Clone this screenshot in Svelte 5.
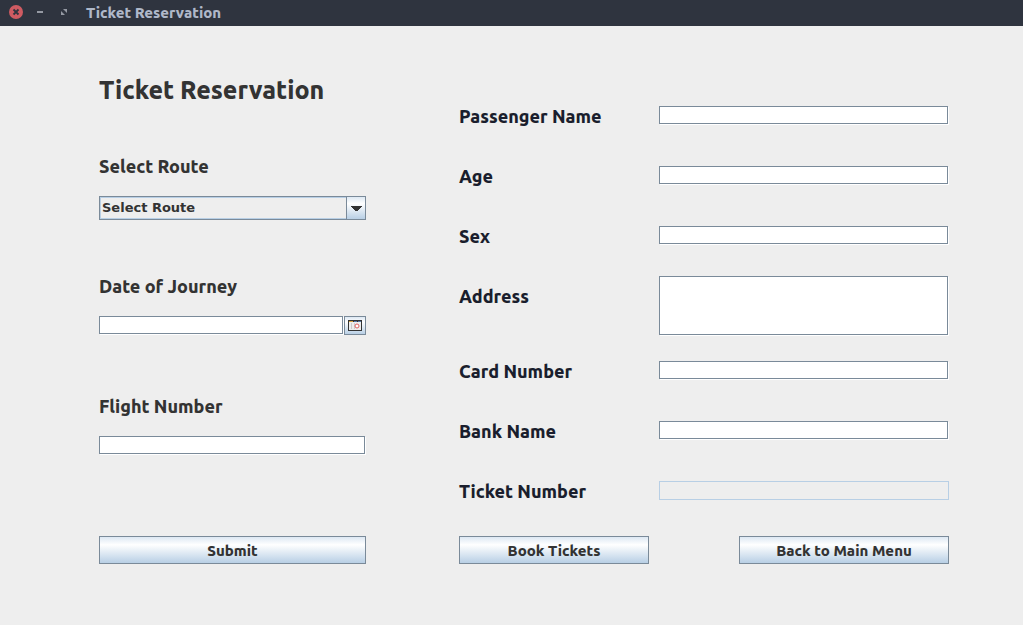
<script>
  let route = $state('Select Route');
  let journeyDate = $state('');
  let flight = $state('');
  let passenger = $state({ name: '', age: '', sex: '', address: '', card: '', bank: '', ticket: '' });

  const fields = [
    { key: 'name', label: 'Passenger Name' },
    { key: 'age', label: 'Age' },
    { key: 'sex', label: 'Sex' },
    { key: 'address', label: 'Address', multiline: true },
    { key: 'card', label: 'Card Number' },
    { key: 'bank', label: 'Bank Name' },
    { key: 'ticket', label: 'Ticket Number', disabled: true }
  ];
</script>

<div class="window">
  <header class="titlebar">
    <button class="control" type="button" aria-label="Close">
      <svg width="14" height="14" viewBox="0 0 14 14">
        <circle cx="7" cy="7" r="7" fill="#cf5b62" />
        <path d="M4.500 4.500l5 5M9.500 4.500l-5 5" stroke="#30343f" stroke-width="1.8" />
      </svg>
    </button>
    <button class="control" type="button" aria-label="Minimize">
      <svg width="14" height="14" viewBox="0 0 14 14">
        <path d="M4 6h6v2H4z" fill="#9599a3" />
      </svg>
    </button>
    <button class="control" type="button" aria-label="Maximize">
      <svg width="14" height="14" viewBox="0 0 14 14">
        <path d="M6 4h4v4zM4 6v4h4z" fill="#9599a3" />
      </svg>
    </button>
    <span class="caption">Ticket Reservation</span>
  </header>

  <main>
    <form class="journey" onsubmit={(e) => e.preventDefault()}>
      <h1>Ticket Reservation</h1>
      <div class="group">
        <label for="route">Select Route</label>
        <div class="combo">
          <select id="route" bind:value={route}>
            <option>Select Route</option>
          </select>
          <span class="arrow">
            <svg width="11" height="5" viewBox="0 0 11 5" shape-rendering="crispEdges">
              <path d="M0 0h11v1h-1v1h-1v1h-1v1h-1v1h-3v-1h-1v-1h-1v-1h-1v-1h-1z" fill="#333" />
            </svg>
          </span>
        </div>
      </div>
      <div class="group">
        <label for="date">Date of Journey</label>
        <div class="date">
          <input id="date" type="text" bind:value={journeyDate} />
          <button class="metal picker" type="button" aria-label="Choose date">
            <svg width="14" height="11" viewBox="0 0 14 11">
              <path d="M0 0h14v11H0z" fill="#333" />
              <path d="M1 2h12v8H1z" fill="#eee" />
              <path d="M1 1h4v1H1z" fill="#d9a441" />
              <path d="M6 1h3v1H6z" fill="#5577a8" />
              <path d="M10 1h3v1h-3z" fill="#5577a8" />
              <path d="M3.500 3v6M6.500 3v6" stroke="#ccc" />
              <circle cx="9" cy="6" r="2" fill="#fff" stroke="#e06060" />
            </svg>
          </button>
        </div>
      </div>
      <div class="group">
        <label for="flight">Flight Number</label>
        <input id="flight" type="text" bind:value={flight} />
      </div>
      <button class="metal" type="submit">Submit</button>
    </form>

    <form class="passenger" onsubmit={(e) => e.preventDefault()}>
      {#each fields as field}
        <div class="row" class:tall={field.multiline}>
          <label for={field.key}>{field.label}</label>
          {#if field.multiline}
            <textarea id={field.key} bind:value={passenger[field.key]}></textarea>
          {:else}
            <input id={field.key} type="text" disabled={field.disabled} bind:value={passenger[field.key]} />
          {/if}
        </div>
      {/each}
      <div class="actions">
        <button class="metal book" type="submit">Book Tickets</button>
        <button class="metal back" type="button">Back to Main Menu</button>
      </div>
    </form>
  </main>
</div>

<style>
  :global(body) {
    margin: 0;
    background: #eee;
  }

  .window {
    min-height: 100vh;
    background: #eee;
    color: #333;
    font-family: Ubuntu, 'Noto Sans', sans-serif;
    font-weight: 800;
  }

  .window * {
    box-sizing: border-box;
  }

  .titlebar {
    display: flex;
    align-items: center;
    gap: 10px;
    height: 26px;
    padding: 0 9px;
    background: #2f343f;
    color: #afb8c9;
    font-size: 15px;
    line-height: 24px;
  }

  .control {
    display: flex;
    margin: 0 0 2px;
    padding: 0;
    border: 0;
    background: none;
  }

  .caption {
    padding-left: 5px;
  }

  main {
    display: grid;
    grid-template-columns: 267fr 490fr;
    column-gap: 93px;
    padding: 46px 74px 60px 99px;
  }

  .journey {
    display: flex;
    flex-direction: column;
  }

  h1 {
    margin: 0 0 46px;
    font-size: 25px;
    font-weight: 800;
    line-height: 36px;
    white-space: nowrap;
  }

  label {
    font-size: 18px;
    line-height: 24px;
    white-space: nowrap;
  }

  .group {
    display: flex;
    flex-direction: column;
    gap: 18px;
    height: 120px;
  }

  .group:last-of-type {
    margin-bottom: 22px;
  }

  input,
  textarea {
    display: block;
    width: calc(100% - 1px);
    min-width: 0;
    height: 18px;
    margin: 0;
    padding: 0 3px;
    border: 1px solid #7a8a99;
    border-radius: 0;
    background: #fff;
    box-shadow: 1px 1px 0 #fff;
    font: 12px 'DejaVu Sans', sans-serif;
    resize: none;
  }

  textarea {
    height: 59px;
  }

  input:disabled {
    width: 100%;
    height: 19px;
    border-color: #b8cfe5;
    background: #eee;
    box-shadow: none;
  }

  .combo {
    position: relative;
    height: 24px;
  }

  select {
    width: 100%;
    height: 100%;
    padding: 0 22px 2px 2px;
    border: 1px solid #7a8a99;
    border-radius: 0;
    background: #eee;
    box-shadow: inset 0 0 0 1px #b8cfe5;
    color: #333;
    font: 700 13px 'DejaVu Sans', sans-serif;
    appearance: none;
  }

  .arrow {
    position: absolute;
    top: 0;
    right: 0;
    display: grid;
    place-items: center;
    width: 20px;
    height: 100%;
    border: 1px solid #7a8a99;
    background: linear-gradient(#dde8f3, #fff 30%, #b8cfe5);
    pointer-events: none;
  }

  .date {
    display: flex;
    gap: 1px;
  }

  .metal {
    height: 28px;
    padding: 0;
    border: 1px solid #7a8a99;
    border-radius: 0;
    background: linear-gradient(#dde8f3, #fff 30%, #b8cfe5);
    color: #333;
    font: inherit;
    font-size: 15px;
    white-space: nowrap;
  }

  .picker {
    display: grid;
    flex: 0 0 22px;
    place-items: center;
    height: 19px;
  }

  .passenger {
    padding-top: 32px;
    color: #1a1e2d;
  }

  .row {
    display: grid;
    grid-template-columns: 200fr 290fr;
    align-items: start;
    height: 60px;
  }

  .row input,
  .row textarea {
    margin-top: 2px;
  }

  .row:nth-child(3) {
    height: 50px;
  }

  .tall {
    height: 85px;
  }

  .tall label {
    padding-top: 10px;
  }

  .row:nth-child(7) {
    height: 57px;
  }

  .actions {
    display: grid;
    grid-template-columns: 190fr 210fr;
    gap: 90px;
  }
</style>
